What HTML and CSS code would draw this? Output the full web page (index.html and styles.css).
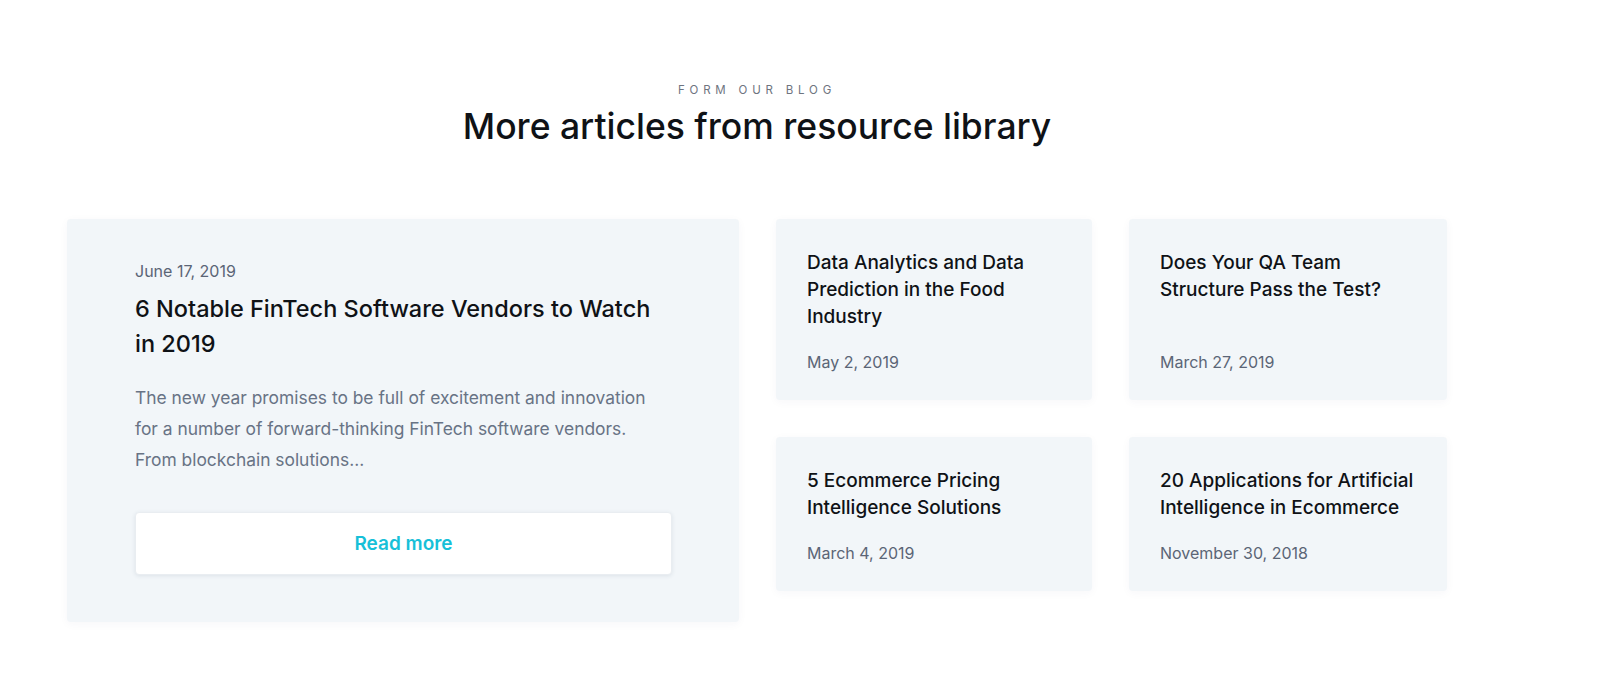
FILE: index.html
```html
<!DOCTYPE html>
<html lang="en">
<head>
<meta charset="utf-8">
<title>More articles from resource library</title>
<link rel="stylesheet" href="styles.css">
</head>
<body>
<section class="blog">
  <header class="blog-head">
    <p class="eyebrow">FORM OUR BLOG</p>
    <h2 class="title">More articles from resource library</h2>
  </header>
  <div class="blog-body">
    <article class="feature">
      <p class="feature-date">June 17, 2019</p>
      <h3 class="feature-title">6 Notable FinTech Software Vendors to Watch in 2019</h3>
      <p class="feature-text">The new year promises to be full of excitement and innovation for a number of forward-thinking FinTech software vendors. From blockchain solutions...</p>
      <a class="btn" href="#">Read more</a>
    </article>
    <div class="side">
      <article class="card">
        <h4 class="card-title">Data Analytics and Data Prediction in the Food Industry</h4>
        <p class="card-date">May 2, 2019</p>
      </article>
      <article class="card">
        <h4 class="card-title">Does Your QA Team Structure Pass the Test?</h4>
        <p class="card-date">March 27, 2019</p>
      </article>
      <article class="card">
        <h4 class="card-title">5 Ecommerce Pricing Intelligence Solutions</h4>
        <p class="card-date">March 4, 2019</p>
      </article>
      <article class="card">
        <h4 class="card-title">20 Applications for Artificial Intelligence in Ecommerce</h4>
        <p class="card-date">November 30, 2018</p>
      </article>
    </div>
  </div>
</section>
</body>
</html>
```
FILE: styles.css
```css
* { box-sizing: border-box; }
body {
  margin: 0;
  background: #ffffff;
  font-family: "Inter", "Roboto", "Liberation Sans", sans-serif;
  color: #111418;
}
.blog {
  padding: 82px 0 60px;
}
.blog-head {
  width: 1380px;
  margin-left: 67px;
  text-align: center;
}
.eyebrow {
  margin: 0;
  font-size: 11.5px;
  line-height: 16px;
  letter-spacing: 4.8px;
  color: #6e7480;
}
.title {
  margin: 7px 0 0;
  font-size: 35.5px;
  line-height: 44px;
  font-weight: 500;
  color: #0f1216;
}
.blog-body {
  display: flex;
  align-items: flex-start;
  gap: 37px;
  width: 1380px;
  margin: 70px 0 0 67px;
}
.feature {
  width: 672px;
  height: 403px;
  flex: none;
  padding: 40px 67px 45px 68px;
  background: #f2f6f9;
  border-radius: 4px;
  box-shadow: 0 2px 10px rgba(40, 60, 90, 0.04);
}
.feature-date {
  margin: 0;
  font-size: 16px;
  line-height: 24px;
  color: #5b6576;
}
.feature-title {
  max-width: 530px;
  margin: 8px 0 0;
  font-size: 23.5px;
  line-height: 35px;
  font-weight: 500;
  color: #0f1216;
}
.feature-text {
  max-width: 522px;
  margin: 21px 0 0;
  font-size: 17.4px;
  line-height: 31px;
  color: #687385;
}
.btn {
  display: flex;
  align-items: center;
  justify-content: center;
  height: 63px;
  margin-top: 37px;
  background: #ffffff;
  border: 1px solid #e9edf1;
  border-radius: 4px;
  box-shadow: 0 1px 4px rgba(40, 60, 90, 0.10);
  color: #17c0d8;
  font-size: 19px;
  font-weight: 600;
  text-decoration: none;
}
.side {
  display: grid;
  grid-template-columns: 316px 318px;
  column-gap: 37px;
  row-gap: 37px;
  align-items: stretch;
}
.card {
  display: flex;
  flex-direction: column;
  padding: 30px 25px 26px 31px;
  background: #f2f6f9;
  border-radius: 4px;
  box-shadow: 0 2px 10px rgba(40, 60, 90, 0.04);
}
.card-title {
  margin: 0;
  font-size: 19px;
  line-height: 27px;
  font-weight: 500;
  color: #0f1216;
}
.card-date {
  margin: auto 0 0;
  padding-top: 20px;
  font-size: 16px;
  line-height: 24px;
  color: #5b6576;
}
```
